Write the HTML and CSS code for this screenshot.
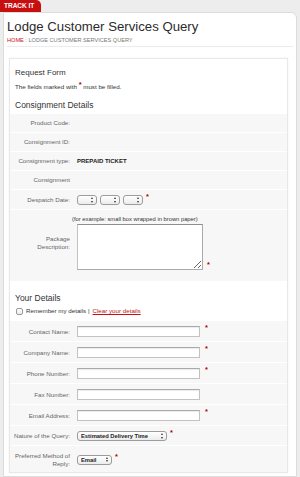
FILE: index.html
```html
<!DOCTYPE html>
<html lang="en">
<head>
    <meta charset="UTF-8">
    <meta name="viewport" content="width=device-width, initial-scale=1.0">
    <title>Lodge Customer Services Query</title>
    <link rel="stylesheet" href="styles.css">
</head>
<body>
    <div class="topbar"><span class="tab">TRACK IT</span></div>
    <div class="page">
        <h1 class="title">Lodge Customer Services Query</h1>
        <div class="crumbs"><a href="#">HOME</a> : LODGE CUSTOMER SERVICES QUERY</div>

        <form class="panel">
            <div class="intro">
                <h2>Request Form</h2>
                <p class="note">The fields marked with <span class="req">*</span> must be filled.</p>
                <h2 class="section">Consignment Details</h2>
            </div>

            <div class="row text"><label>Product Code:</label><div class="field"></div></div>
            <div class="row text"><label>Consignment ID:</label><div class="field"></div></div>
            <div class="row text"><label>Consignment type:</label><div class="field"><b>PREPAID TICKET</b></div></div>
            <div class="row text"><label>Consignment</label><div class="field"></div></div>
            <div class="row choice">
                <label>Despatch Date:</label>
                <div class="field">
                    <span class="pick small"><select><option></option></select></span>
                    <span class="pick small"><select><option></option></select></span>
                    <span class="pick small"><select><option></option></select></span>
                    <span class="req">*</span>
                </div>
            </div>
            <div class="row tall">
                <label>Package<br>Description:</label>
                <div class="field column">
                    <span class="hint">(for example: small box wrapped in brown paper)</span>
                    <div class="area-wrap"><textarea rows="4"></textarea><span class="req">*</span></div>
                </div>
            </div>

            <div class="intro details">
                <h2 class="section">Your Details</h2>
                <div class="remember">
                    <input type="checkbox" id="remember">
                    <label for="remember">Remember my details |</label>
                    <a href="#">Clear your details</a>
                </div>
            </div>

            <div class="row"><label>Contact Name:</label><div class="field"><input type="text"><span class="req">*</span></div></div>
            <div class="row"><label>Company Name:</label><div class="field"><input type="text"><span class="req">*</span></div></div>
            <div class="row"><label>Phone Number:</label><div class="field"><input type="text"><span class="req">*</span></div></div>
            <div class="row"><label>Fax Number:</label><div class="field"><input type="text"></div></div>
            <div class="row"><label>Email Address:</label><div class="field"><input type="text"><span class="req">*</span></div></div>
            <div class="row choice">
                <label>Nature of the Query:</label>
                <div class="field">
                    <span class="pick wide"><select><option>Estimated Delivery Time</option></select></span>
                    <span class="req">*</span>
                </div>
            </div>
            <div class="row last">
                <label>Preferred Method of Reply:</label>
                <div class="field">
                    <span class="pick mid"><select><option>Email</option></select></span>
                    <span class="req">*</span>
                </div>
            </div>
        </form>
    </div>
</body>
</html>
```

FILE: styles.css
```css
body {
    margin: 0;
    background: #ededed;
    font-family: "Liberation Sans", Arial, sans-serif;
    color: #333;
}
.topbar {
    height: 12px;
    display: flex;
}
.tab {
    background: #c80f0f;
    color: #fff;
    font-weight: bold;
    font-size: 6.5px;
    line-height: 12px;
    height: 12px;
    padding: 0 7px 0 4px;
    border-radius: 0 5px 0 0;
}
.page {
    margin: 0 3px 0 3px;
    background: #fff;
    border: 1px solid #dcdcdc;
    border-radius: 0 6px 0 0;
    padding-bottom: 3px;
}
.title {
    margin: 6px 0 0 3px;
    font-size: 13.2px;
    line-height: 16px;
    font-weight: normal;
    color: #2b2b2b;
}
.crumbs {
    margin: 1px 3px 0 3px;
    padding-bottom: 2px;
    border-bottom: 1px solid #ececec;
    font-size: 5.6px;
    line-height: 8px;
    color: #777;
}
.crumbs a {
    color: #c80f0f;
    text-decoration: none;
}
.panel {
    margin: 11px 8px 0 5px;
    border: 1px solid #e8e8e8;
    box-shadow: 0 0 2px rgba(0, 0, 0, 0.06);
}
.intro {
    padding: 9px 5px 3px 5px;
}
.intro h2 {
    margin: 0;
    font-size: 8px;
    line-height: 10px;
    font-weight: normal;
    color: #333;
}
.intro h2.section {
    font-size: 8.5px;
}
.note {
    margin: 5px 0 9px;
    font-size: 6.2px;
    line-height: 8px;
    color: #333;
}
.req {
    color: #b00000;
    font-weight: bold;
    font-size: 7.5px;
    line-height: 6px;
    align-self: flex-start;
    position: relative;
    top: -1px;
}
.note .req {
    position: relative;
    top: -2px;
    font-size: 7.5px;
}
.row {
    display: grid;
    grid-template-columns: 60px 1fr;
    column-gap: 7px;
    align-items: center;
    background: #f7f7f7;
    border-top: 1px solid #fff;
    padding: 5px 0 4px;
}
.row.text {
    padding: 5px 0 5px;
}
.row.choice {
    padding: 5px 0 4px;
}
.row > label {
    text-align: right;
    font-size: 6.2px;
    line-height: 7.5px;
    color: #666;
}
.field {
    display: flex;
    align-items: center;
    gap: 3px;
    font-size: 6px;
    line-height: 8px;
    min-height: 8px;
}
.field b {
    color: #222;
}
.field input[type="text"] {
    width: 123px;
    height: 11px;
    box-sizing: border-box;
    border: 1px solid #c2c2c2;
    border-top-color: #a9a9a9;
    box-shadow: inset 0 1px 1px rgba(0, 0, 0, 0.08);
    margin: 0 2px 0 0;
    padding: 0 2px;
    font-size: 6px;
}
.row.tall {
    padding: 5px 0 11px;
}
.field.column {
    flex-direction: column;
    align-items: flex-start;
    gap: 1px;
}
.hint {
    color: #333;
    font-size: 5.8px;
    margin-left: -5px;
}
.area-wrap {
    display: flex;
    align-items: flex-end;
    gap: 4px;
}
.area-wrap .req {
    align-self: flex-end;
    top: -2px;
}
textarea {
    width: 126px;
    height: 46px;
    box-sizing: border-box;
    border: 1px solid #aaa;
    border-left-color: #c2c2c2;
    border-top-color: #8f8f8f;
    margin: 0;
    resize: both;
}
.details {
    border-top: 1px solid #fff;
    background: #fff;
    padding: 11px 5px 5px 5px;
}
.remember {
    display: flex;
    align-items: center;
    gap: 3px;
    margin-top: 4px;
    font-size: 6.2px;
    line-height: 8px;
    color: #333;
}
.remember input {
    appearance: none;
    width: 7px;
    height: 7px;
    margin: 0 0 0 1px;
    border: 1px solid #999;
    border-radius: 2px;
    background: linear-gradient(#fff, #ececec);
}
.remember a {
    color: #c80f0f;
}
.pick {
    position: relative;
    display: inline-block;
    height: 10px;
}
.pick select {
    appearance: none;
    height: 10px;
    box-sizing: border-box;
    border: 1px solid #9c9c9c;
    border-radius: 3px;
    background: linear-gradient(#ffffff, #ececec);
    font-family: "Liberation Sans", Arial, sans-serif;
    font-size: 5.8px;
    font-weight: bold;
    color: #222;
    padding: 0 8px 0 3px;
    margin: 0;
    line-height: 8px;
    display: block;
}
.pick::before,
.pick::after {
    content: "";
    position: absolute;
    right: 4px;
    border-left: 1.5px solid transparent;
    border-right: 1.5px solid transparent;
}
.pick::before {
    top: 2px;
    border-bottom: 2px solid #333;
}
.pick::after {
    top: 5.5px;
    border-top: 2px solid #333;
}
.pick.small select {
    width: 20px;
}
.pick.wide select {
    width: 90px;
}
.pick.mid select {
    width: 35px;
}
.row.last {
    padding: 6px 0 5px;
}
```
